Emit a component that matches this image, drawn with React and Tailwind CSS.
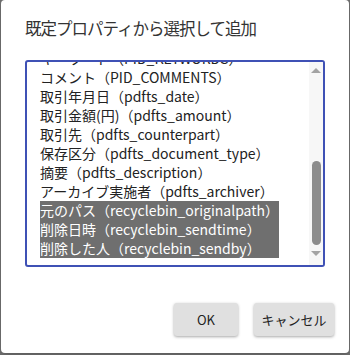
import React from 'react';

const items = [
    { label: 'キーワード（PID_KEYWORDS）' },
    { label: 'コメント（PID_COMMENTS）' },
    { label: '取引年月日（pdfts_date）' },
    { label: '取引金額(円)（pdfts_amount）' },
    { label: '取引先（pdfts_counterpart）' },
    { label: '保存区分（pdfts_document_type）' },
    { label: '摘要（pdfts_description）' },
    { label: 'アーカイブ実施者（pdfts_archiver）' },
    { label: '元のパス（recyclebin_originalpath）', selected: true },
    { label: '削除日時（recyclebin_sendtime）', selected: true },
    { label: '削除した人（recyclebin_sendby）', selected: true },
];

const font = { fontFamily: '"Noto Sans CJK JP", "Noto Sans", sans-serif' };

const App = () => {
    return (
        <div className="w-[350px] h-[355px] bg-[#6e6e6e] overflow-hidden" style={font}>
            <div className="ml-[1px] w-[348px] h-[353px] bg-white rounded-[4px] flex flex-col px-6 pt-[16px] shadow-md">
                <h2 className="text-[16.5px] leading-[24px] text-[#333] tracking-[-1px]">既定プロパティから選択して追加</h2>

                <div className="mt-[20px] h-[207px] border-2 border-[#3f51b5] rounded-[3px] flex overflow-hidden">
                    <div className="flex-1 overflow-hidden pl-[13px]">
                        <div className="w-max -mt-[13px] text-[14px] leading-[19px] text-[#222]">
                            {items.map((it) => (
                                <div key={it.label} className={it.selected ? 'bg-[#6f6f6f] text-white' : ''}>
                                    {it.label}
                                </div>
                            ))}
                        </div>
                    </div>
                    <div className="w-[14px] bg-[#f7f7f7] flex flex-col items-center">
                        <div className="mt-[6px] w-0 h-0 border-l-[5px] border-r-[5px] border-b-[5px] border-l-transparent border-r-transparent border-b-[#a3a3a3]" />
                        <div className="mt-[88px] w-[9px] h-[84px] rounded-full bg-[#8c8c8c]" />
                        <div className="mt-[6px] w-0 h-0 border-l-[5px] border-r-[5px] border-t-[5px] border-l-transparent border-r-transparent border-t-[#a3a3a3]" />
                    </div>
                </div>

                <div className="mt-[36px] flex justify-end gap-4 -mr-[9px]">
                    <button className="w-[64px] h-[33px] bg-[#e0e0e0] rounded-[3px] shadow-[0_1px_3px_rgba(0,0,0,0.35)] text-[13px] text-[#222]">OK</button>
                    <button className="w-[80px] h-[33px] bg-[#e0e0e0] rounded-[3px] shadow-[0_1px_3px_rgba(0,0,0,0.35)] text-[13px] text-[#222]">キャンセル</button>
                </div>
            </div>
        </div>
    );
};

export default App;
